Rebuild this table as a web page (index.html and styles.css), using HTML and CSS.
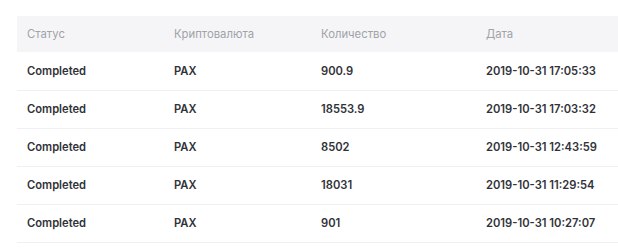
FILE: index.html
```html
<!DOCTYPE html>
<html lang="ru">
<head>
<meta charset="utf-8">
<link rel="stylesheet" href="styles.css">
</head>
<body>
<div class="wrap">
<table class="tbl">
  <thead>
    <tr><th class="c1">Статус</th><th class="c2">Криптовалюта</th><th class="c3">Количество</th><th class="c4">Дата</th></tr>
  </thead>
  <tbody>
    <tr><td>Completed</td><td>PAX</td><td>900.9</td><td>2019-10-31 17:05:33</td></tr>
    <tr><td>Completed</td><td>PAX</td><td>18553.9</td><td>2019-10-31 17:03:32</td></tr>
    <tr><td>Completed</td><td>PAX</td><td>8502</td><td>2019-10-31 12:43:59</td></tr>
    <tr><td>Completed</td><td>PAX</td><td>18031</td><td>2019-10-31 11:29:54</td></tr>
    <tr><td>Completed</td><td>PAX</td><td>901</td><td>2019-10-31 10:27:07</td></tr>
  </tbody>
</table>
</div>
</body>
</html>
```

FILE: styles.css
```css
html, body { margin: 0; padding: 0; background: #fff; }
body { font-family: Inter, "Noto Sans", sans-serif; }
.wrap { padding: 16px 0 0 17px; }
.tbl { border-collapse: collapse; width: 601px; table-layout: fixed; }
.tbl th, .tbl td { box-sizing: border-box; white-space: nowrap; text-align: left; padding: 0 0 0 10px; }
.tbl th { background: #f5f5f7; color: #a0a3a8; font-weight: 400; font-size: 11.3px; height: 36px; }
.c1 { width: 147px; }
.c2 { width: 147px; }
.c3 { width: 165px; }
.c4 { width: 142px; }
.tbl td { height: 38px; border-bottom: 1px solid #f0f0f2; font-size: 11.2px; font-weight: 600; color: #303238; }
```
